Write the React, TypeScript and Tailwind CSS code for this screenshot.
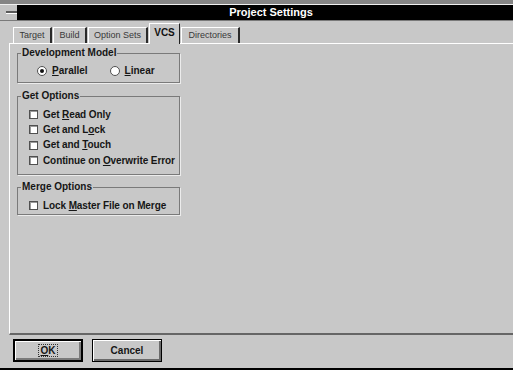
import React from "react";

const font = { fontFamily: '"Liberation Sans", Arial, sans-serif' };

function Check({ children }: { children: React.ReactNode }) {
  return (
    <div className="flex h-[15.3px] items-center pl-[11px]">
      <div className="h-[9px] w-[9px] border border-[#505050] bg-white shadow-[inset_1px_1px_0_#9a9a9a]" />
      <span className="ml-[5px] text-[10px] font-bold leading-[12px] tracking-[-0.1px] text-[#161616]">{children}</span>
    </div>
  );
}

function Radio({ on, children }: { on?: boolean; children: React.ReactNode }) {
  return (
    <div className="flex items-center">
      <div className="flex h-[10px] w-[10px] items-center justify-center rounded-full border border-[#505050] bg-white">
        {on && <div className="h-[4px] w-[4px] rounded-full bg-[#111]" />}
      </div>
      <span className="ml-[5px] text-[10px] font-bold leading-[12px] text-[#161616]">{children}</span>
    </div>
  );
}

function Group({ title, className, children }: { title: string; className?: string; children: React.ReactNode }) {
  return (
    <fieldset className={"w-[163px] border border-[#7a7a7a] shadow-[1px_1px_0_#ececec] " + (className ?? "")}>
      <legend className="ml-[3px] px-[1px] text-[10px] font-bold leading-[12px] text-[#161616]">{title}</legend>
      {children}
    </fieldset>
  );
}

function Tab({ label, w, active }: { label: string; w: string; active?: boolean }) {
  if (active) {
    return (
      <div
        className={`relative z-10 -mb-px ml-[1px] flex h-[21px] items-center justify-center border-l border-t border-white border-r border-r-[#222] bg-[#c8c8c8] pb-[4px] text-[10px] font-bold text-[#111] ${w}`}
      >
        {label}
      </div>
    );
  }
  return (
    <div
      className={`ml-[1px] flex h-[16px] items-center justify-center border-l border-t border-white border-r-2 border-r-[#2a2a2a] bg-[#c8c8c8] pt-[1px] text-[9px] text-[#383838] ${w}`}
    >
      {label}
    </div>
  );
}

export default function App() {
  return (
    <div className="flex h-[370px] w-[513px] flex-col overflow-hidden bg-[#c8c8c8]" style={font}>
      <div className="h-[4px] bg-[#858585]" />
      <div className="h-px bg-[#f0f0f0]" />
      <div className="flex h-[15px] bg-black">
        <div className="flex h-[15px] w-[17px] items-center bg-[#c4c4c4] pl-[6px]">
          <div className="h-[3px] w-[11px] border-b border-white bg-[#5a5a5a]" />
        </div>
        <div className="flex flex-1 items-center justify-center pl-[12px] text-[11px] font-bold leading-none text-white">
          Project Settings
        </div>
      </div>
      <div className="h-px bg-[#7a7a7a]" />
      <div className="flex h-[22px] items-end pl-[12px]">
        <Tab label="Target" w="w-[39px]" />
        <Tab label="Build" w="w-[34px]" />
        <Tab label="Option Sets" w="w-[60px]" />
        <Tab label="VCS" w="w-[31px]" active />
        <Tab label="Directories" w="w-[59px]" />
      </div>
      <div className="ml-[9px] flex h-[292px] flex-col border-l border-t border-white border-b-2 border-b-[#666] pl-[7px] pt-[3px]">
        <Group title="Development Model">
          <div className="flex items-center pb-[5px] pl-[19px] pt-[6px]">
            <Radio on>
              <u>P</u>arallel
            </Radio>
            <div className="ml-[22px]">
              <Radio>
                <u>L</u>inear
              </Radio>
            </div>
          </div>
        </Group>
        <Group title="Get Options" className="mt-[7px]">
          <div className="pb-[6px] pt-[5px]">
            <Check>
              Get <u>R</u>ead Only
            </Check>
            <Check>
              Get and L<u>o</u>ck
            </Check>
            <Check>
              Get and <u>T</u>ouch
            </Check>
            <Check>
              Continue on <u>O</u>verwrite Error
            </Check>
          </div>
        </Group>
        <Group title="Merge Options" className="mt-[6px]">
          <div className="pb-[1px] pt-[5px]">
            <Check>
              Lock <u>M</u>aster File on Merge
            </Check>
          </div>
        </Group>
      </div>
      <div className="mt-[4px] flex pl-[13px]">
        <div className="flex h-[23px] w-[70px] items-center justify-center border-2 border-black bg-[#c8c8c8] shadow-[inset_1px_1px_0_#ffffff,inset_-2px_-2px_0_#7a7a7a]">
          <span className="px-[1px] text-[10px] font-bold leading-[11px] text-[#161616] outline outline-1 outline-dotted outline-[#333]">
            <u>O</u>K
          </span>
        </div>
        <div className="ml-[9px] flex h-[23px] w-[70px] items-center justify-center border border-black bg-[#c8c8c8] shadow-[inset_1px_1px_0_#ffffff,inset_-2px_-2px_0_#6a6a6a]">
          <span className="text-[10px] font-bold leading-[11px] text-[#161616]">Cancel</span>
        </div>
      </div>
      <div className="flex-1" />
      <div className="h-[2px] bg-black" />
    </div>
  );
}
